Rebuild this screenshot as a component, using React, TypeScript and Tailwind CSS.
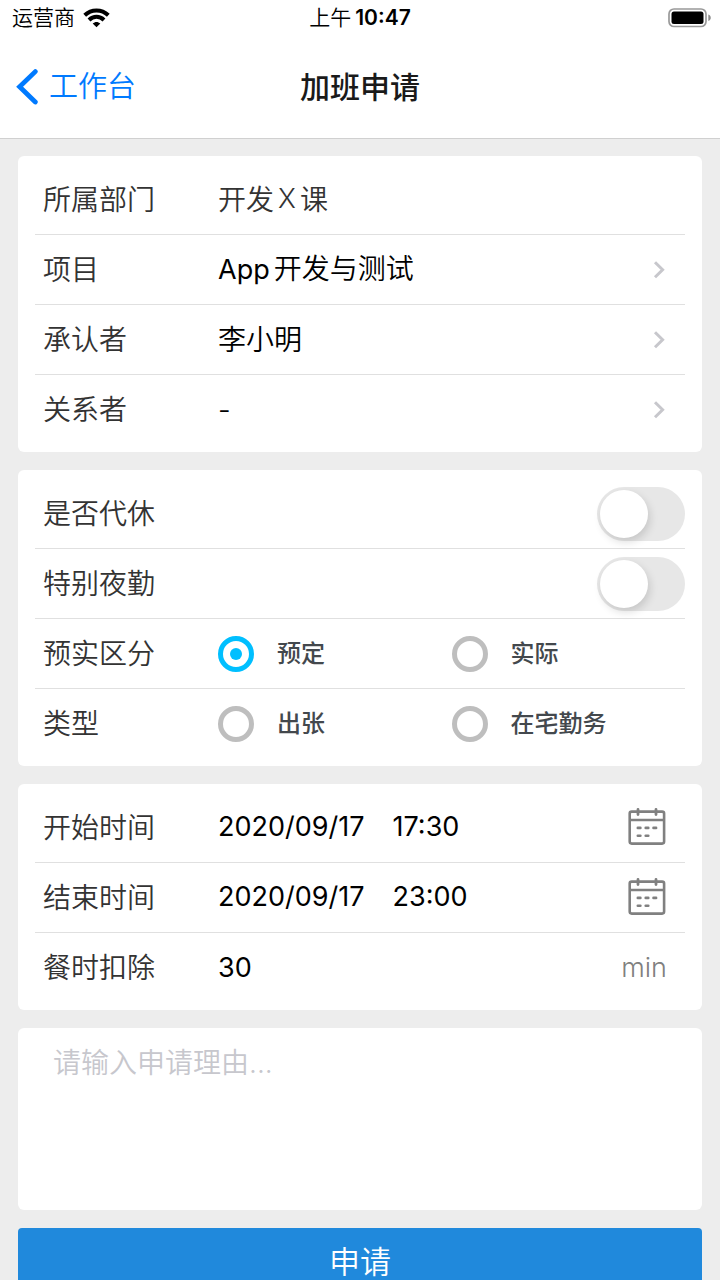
import { useState, type ReactNode } from "react";

const FONT = "font-['Inter','Noto_Sans_CJK_SC',sans-serif]";

function StatusBar() {
  return (
    <div className="grid h-9 grid-cols-3 items-center px-3 text-[21px] leading-9 font-[350] text-black">
      <div className="flex items-center gap-2">
        <span>运营商</span>
        <svg className="h-5 w-[27px]" viewBox="0 0 27 20" fill="none" stroke="#000" strokeWidth="4" aria-hidden="true">
          <path d="M1.7 7.2 C8.4 0.8 18.6 0.8 25.3 7.2" />
          <path d="M6 12 C10.3 7.8 16.7 7.8 21 12" />
          <path d="M13.5 19.3 L9.7 15.6 C12 13.4 15 13.4 17.3 15.6 Z" fill="#000" stroke="none" />
        </svg>
      </div>
      <div className="flex items-center justify-center gap-1">
        <span>上午</span>
        <span className="font-semibold">10:47</span>
      </div>
      <div className="flex justify-end">
        <svg className="-mr-1 h-5 w-11" viewBox="0 0 44 20" aria-hidden="true">
          <rect x="1" y="1" width="37" height="17.5" rx="5" fill="#fff" stroke="#999" strokeWidth="1.7" />
          <rect x="3.5" y="3.5" width="32" height="12.5" rx="2.5" fill="#000" />
          <path d="M40.3 6.5 C43.6 7.6 43.6 12 40.3 13.1 Z" fill="#8c8c8c" />
        </svg>
      </div>
    </div>
  );
}

function Chevron() {
  return (
    <svg className="mr-5 h-[18px] w-3 shrink-0" viewBox="0 0 12 18" fill="none" stroke="#c7c7cc" strokeWidth="3" aria-hidden="true">
      <path d="M2 1.2 L9.6 8.7 L2 16.2" />
    </svg>
  );
}

function CalendarIcon() {
  return (
    <svg className="mr-[19px] h-10 w-[38px] shrink-0" viewBox="0 0 38 40" fill="none" stroke="#808080" strokeWidth="2.6" strokeLinecap="round" aria-hidden="true">
      <rect x="1.7" y="3.6" width="34.4" height="32" rx="2" />
      <path d="M2 12 H36" strokeLinecap="butt" />
      <path d="M10 1.4 V6.6 M28 1.4 V6.6" strokeWidth="2.8" />
      <path d="M9.8 19.9 H12.4 M17.7 19.9 H20.3 M25.5 19.9 H28.1 M9.8 27.7 H12.4 M17.7 27.7 H20.3" />
    </svg>
  );
}

function Card({ children }: { children: ReactNode }) {
  return <section className="rounded-md bg-white px-[17px] pt-[9px] pb-[7px]">{children}</section>;
}

const rowClass = "flex h-[70px] w-full items-center border-b border-[#e0e0e0] pl-2 text-left text-[28px] font-[350] last:border-b-0";
const labelClass = "w-[175px] shrink-0 text-[#333]";

function PickerRow({ label, value, icon }: { label: string; value: ReactNode; icon: ReactNode }) {
  return (
    <button type="button" className={rowClass}>
      <span className={labelClass}>{label}</span>
      <span className="flex flex-1 text-black">{value}</span>
      {icon}
    </button>
  );
}

function SwitchRow({ label }: { label: string }) {
  const [on, setOn] = useState(false);
  return (
    <label className={rowClass}>
      <span className={labelClass}>{label}</span>
      <input
        type="checkbox"
        role="switch"
        checked={on}
        onChange={() => setOn(!on)}
        className="ml-auto h-[54px] w-[88px] shrink-0 appearance-none rounded-full bg-[#e7e7e7] p-[3px] before:block before:size-12 before:rounded-full before:bg-white before:shadow-[2px_4px_8px_rgba(0,0,0,0.14)] checked:bg-[#00bfff] checked:before:ml-[34px]"
      />
    </label>
  );
}

function RadioRow({ label, name, options, initial }: { label: string; name: string; options: string[]; initial?: string }) {
  const [selected, setSelected] = useState(initial);
  return (
    <div role="radiogroup" aria-label={label} className={rowClass}>
      <span className={labelClass}>{label}</span>
      <div className="grid flex-1 grid-cols-2">
        {options.map((option) => (
          <label key={option} className="flex items-center gap-[23px] text-2xl font-medium text-[#43484d]">
            <input
              type="radio"
              name={name}
              checked={selected === option}
              onChange={() => setSelected(option)}
              className="grid size-9 shrink-0 appearance-none place-items-center rounded-full border-[5px] border-[#bebebe] before:size-3 before:rounded-full checked:border-[#00bfff] checked:before:bg-[#00bfff]"
            />
            {option}
          </label>
        ))}
      </div>
    </div>
  );
}

function DateTime({ date, time }: { date: string; time: string }) {
  return (
    <span className="flex gap-7 text-[27px] font-normal">
      <span>{date}</span>
      <span>{time}</span>
    </span>
  );
}

export default function App() {
  return (
    <div className={`flex h-screen flex-col bg-[#ededed] ${FONT}`}>
      <header className="shrink-0 border-b border-[#d0d0d0] bg-white">
        <StatusBar />
        <nav className="grid h-[102px] grid-cols-[1fr_auto_1fr] items-center px-4">
          <a href="#workbench" className="flex items-center gap-[11px] text-[29px] text-[#007aff]">
            <svg className="h-9 w-[22px]" viewBox="0 0 22 36" fill="none" stroke="#007aff" strokeWidth="4.8" strokeLinecap="round" aria-hidden="true">
              <path d="M19.3 2.6 L3.6 17.8 L19.3 33" />
            </svg>
            <span className="font-[350]">工作台</span>
          </a>
          <h1 className="text-[30px] font-medium text-[#1a1a1a]">加班申请</h1>
        </nav>
      </header>
      <main className="min-h-0 flex-1 overflow-y-auto [scrollbar-width:none]">
        <form className="flex flex-col gap-[18px] px-[18px] pt-[17px] pb-[18px]" onSubmit={(e) => e.preventDefault()}>
          <Card>
            <div className={rowClass}>
              <span className={labelClass}>所属部门</span>
              <span className="flex gap-1 text-[#333]">
                <span>开发</span>
                <span className="text-[27px] font-light">X</span>
                <span>课</span>
              </span>
            </div>
            <PickerRow
              label="项目"
              value={
                <span className="flex items-baseline gap-1">
                  <span className="text-[27px] font-normal">App</span>
                  <span>开发与测试</span>
                </span>
              }
              icon={<Chevron />}
            />
            <PickerRow label="承认者" value="李小明" icon={<Chevron />} />
            <PickerRow label="关系者" value="-" icon={<Chevron />} />
          </Card>
          <Card>
            <SwitchRow label="是否代休" />
            <SwitchRow label="特别夜勤" />
            <RadioRow label="预实区分" name="plan" options={["预定", "实际"]} initial="预定" />
            <RadioRow label="类型" name="kind" options={["出张", "在宅勤务"]} />
          </Card>
          <Card>
            <PickerRow label="开始时间" value={<DateTime date="2020/09/17" time="17:30" />} icon={<CalendarIcon />} />
            <PickerRow label="结束时间" value={<DateTime date="2020/09/17" time="23:00" />} icon={<CalendarIcon />} />
            <div className={rowClass}>
              <label htmlFor="meal" className={labelClass}>
                餐时扣除
              </label>
              <input id="meal" inputMode="numeric" defaultValue="30" className="min-w-0 flex-1 bg-transparent text-[27px] font-normal text-black outline-none" />
              <span className="mr-[18px] text-[27px] font-light text-[#808080]">min</span>
            </div>
          </Card>
          <textarea
            aria-label="申请理由"
            placeholder="请输入申请理由..."
            className="block h-[182px] w-full resize-none rounded-md bg-white px-[35px] py-[13px] text-[28px] leading-[44px] font-[350] text-black outline-none placeholder:text-[#c7c7cd]"
          />
          <button type="submit" className="h-[68px] w-full rounded bg-[#2089dc] text-[31px] font-[350] text-white">
            申请
          </button>
        </form>
      </main>
    </div>
  );
}
